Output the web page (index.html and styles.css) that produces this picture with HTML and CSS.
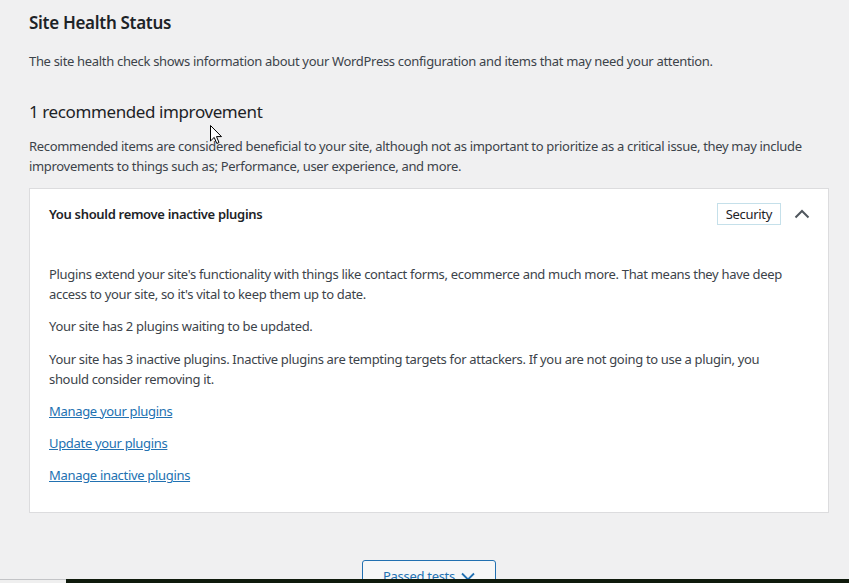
FILE: index.html
```html
<!DOCTYPE html>
<html>
<head>
<meta charset="utf-8">
<link rel="stylesheet" href="styles.css">
</head>
<body>
<div class="wrap">
  <h2 class="title">Site Health Status</h2>
  <p class="intro">The site health check shows information about your WordPress configuration and items that may need your attention.</p>
  <h3 class="count">1 recommended improvement</h3>
  <p class="desc">Recommended items are considered beneficial to your site, although not as important to prioritize as a critical issue, they may include improvements to things such as; Performance, user experience, and more.</p>
  <div class="card">
    <div class="card-head">
      <span class="card-title">You should remove inactive plugins</span>
      <span class="badge">Security</span>
      <svg class="chev" width="16" height="10" viewBox="0 0 16 10"><path d="M1.5 8.5 L8 2 L14.5 8.5" fill="none" stroke="#50575e" stroke-width="2"/></svg>
    </div>
    <div class="card-body">
      <p>Plugins extend your site's functionality with things like contact forms, ecommerce and much more. That means they have deep access to your site, so it's vital to keep them up to date.</p>
      <p>Your site has 2 plugins waiting to be updated.</p>
      <p>Your site has 3 inactive plugins. Inactive plugins are tempting targets for attackers. If you are not going to use a plugin, you should consider removing it.</p>
      <p><a href="#">Manage your plugins</a></p>
      <p><a href="#">Update your plugins</a></p>
      <p><a href="#">Manage inactive plugins</a></p>
    </div>
  </div>
  <div class="btn-row">
    <button class="passed">Passed tests <svg width="14" height="9" viewBox="0 0 14 9"><path d="M1 1.5 L7 7.5 L13 1.5" fill="none" stroke="#2271b1" stroke-width="1.8"/></svg></button>
  </div>
</div>
<svg class="cursor" width="13" height="20" viewBox="0 0 13 20"><path d="M0.5 0.5 L0.5 16 L4.2 12.4 L6.8 18.5 L9 17.5 L6.5 11.6 L11.5 11.6 Z" fill="#fff" stroke="#000" stroke-width="1"/></svg>
<div class="taskbar"><div class="tb-left"></div><div class="tb-main"></div></div>
</body>
</html>
```
FILE: styles.css
```css
html, body {
  margin: 0;
  padding: 0;
  background: #f0f0f1;
  height: 100%;
  overflow: hidden;
}
body {
  font-family: "Noto Sans", "Open Sans", sans-serif;
  font-size: 13px;
  line-height: 20px;
  letter-spacing: -0.32px;
  color: #3c434a;
}
.wrap {
  padding: 11px 20px 0 29px;
}
.title {
  margin: 0;
  font-size: 17px;
  line-height: 24px;
  font-weight: 600;
  letter-spacing: -0.3px;
  color: #1d2327;
}
.intro {
  margin: 16px 0 0;
}
.count {
  margin: 29px 0 0;
  font-size: 17px;
  line-height: 24px;
  font-weight: 400;
  letter-spacing: -0.4px;
  color: #1d2327;
}
.desc {
  margin: 12px 0 0;
}
.card {
  margin-top: 12px;
  background: #fff;
  border: 1px solid #dcdcde;
}
.card-head {
  display: flex;
  align-items: center;
  height: 50px;
  padding: 0 18px 0 19px;
}
.card-title {
  flex: 1;
  font-weight: 600;
  color: #1d2327;
}
.badge {
  border: 1px solid #c5e0ea;
  padding: 0 8px;
  line-height: 20px;
  color: #1d2327;
}
.chev {
  margin-left: 13px;
}
.card-body {
  padding: 25px 28px 27px 19px;
}
.card-body p {
  margin: 0 0 12.3px;
}
.card-body p:last-child {
  margin-bottom: 0;
}
.card-body a {
  color: #2271b1;
  text-decoration: underline;
}
.btn-row {
  display: flex;
  justify-content: center;
  margin-top: 47px;
}
.passed {
  display: flex;
  align-items: center;
  gap: 6px;
  width: 134px;
  height: 32px;
  justify-content: center;
  background: #f6f7f7;
  border: 1px solid #2271b1;
  border-radius: 3px;
  color: #2271b1;
  font-family: inherit;
  font-size: 13px;
  letter-spacing: -0.3px;
  padding: 0 10px;
}
.cursor {
  position: absolute;
  left: 210px;
  top: 125px;
}
.taskbar {
  position: fixed;
  left: 0;
  right: 0;
  bottom: 0;
  height: 4px;
  display: flex;
}
.tb-left {
  width: 66px;
  background: #efefef;
  border-top: 1px solid #c3c4c7;
}
.tb-main {
  flex: 1;
  background: #0f1a0c;
}
```
